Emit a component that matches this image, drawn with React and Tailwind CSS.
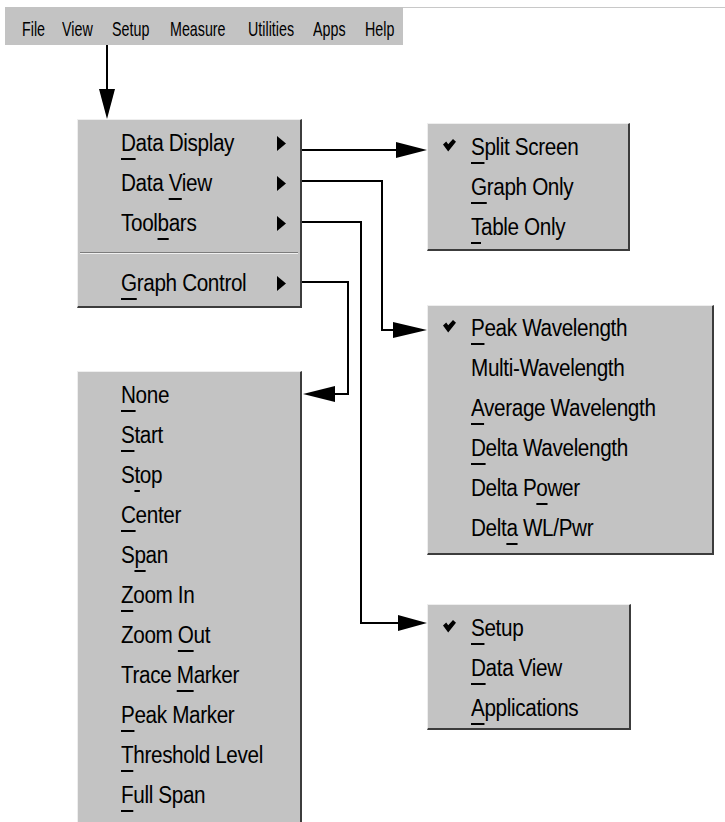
import React from 'react';

const font = "font-['Liberation_Sans',Arial,sans-serif]";

// text with one underlined mnemonic letter (u = index, -1 for none)
const Label = ({ text, u = 0 }) => (
  <span className="inline-block origin-left scale-x-[0.9] whitespace-nowrap">
    {u < 0 ? (
      text
    ) : (
      <>
        {text.slice(0, u)}
        <span className="underline decoration-2 underline-offset-[7px]">{text[u]}</span>
        {text.slice(u + 1)}
      </>
    )}
  </span>
);

const Check = () => (
  <svg width="13" height="13" viewBox="0 0 13 13" className="block">
    <polygon points="0,5.5 3.2,2.6 5.2,5.2 10,0 13,2.8 5.2,12.5" fill="#000" />
  </svg>
);

const SubArrow = () => (
  <svg width="9" height="15" viewBox="0 0 9 15" className="block">
    <polygon points="0,0 9,7.5 0,15" fill="#000" />
  </svg>
);

const Menu = ({ className, children }) => (
  <div
    className={`absolute bg-[#c3c3c3] border-t border-l border-t-[#eeeeee] border-l-[#eeeeee] border-r-2 border-b-2 border-r-[#3c3c3c] border-b-[#3c3c3c] ${className}`}
  >
    {children}
  </div>
);

const Item = ({ text, u, checked, sub }) => (
  <div className="flex items-center h-[40px] pr-[14px]">
    <div className="w-[43px] flex items-center pl-[15px] pb-[4px]">{checked && <Check />}</div>
    <div className="flex-1 overflow-visible">
      <Label text={text} u={u} />
    </div>
    {sub && <SubArrow />}
  </div>
);

const menubar = [
  ['File', 'w-[40px]'], ['View', 'w-[50px]'], ['Setup', 'w-[58px]'], ['Measure', 'w-[78px]'],
  ['Utilities', 'w-[65px]'], ['Apps', 'w-[52px]'], ['Help', 'w-[30px]']
];

const graphItems = [
  ['None', 0], ['Start', 0], ['Stop', 1], ['Center', 0], ['Span', 1], ['Zoom In', 0],
  ['Zoom Out', 5], ['Trace Marker', 6], ['Peak Marker', 0], ['Threshold Level', 0], ['Full Span', 0]
];

const peakItems = [
  ['Peak Wavelength', 0, true], ['Multi-Wavelength', -1], ['Average Wavelength', 0],
  ['Delta Wavelength', 0], ['Delta Power', 7], ['Delta WL/Pwr', 4]
];

export default function App() {
  return (
    <div className={`relative w-[725px] h-[822px] bg-white overflow-hidden text-black ${font}`}>
      {/* menubar */}
      <div className="flex mt-[7px]">
        <div className="ml-[5px] w-[398px] h-[38px] bg-[#c3c3c3] flex items-center pl-[17px] pt-[6px] text-[21px]">
          {menubar.map(([m, w]) => (
            <span key={m} className={`${w} shrink-0`}>
              <span className="inline-block origin-left scale-x-[0.68]">{m}</span>
            </span>
          ))}
        </div>
        <div className="flex-1 border-t border-[#c8c8c8]" />
      </div>

      {/* connectors */}
      <svg className="absolute inset-0 pointer-events-none" width="725" height="822">
        <g stroke="#000" strokeWidth="2" fill="none">
          <path d="M107 45 V90" />
          <path d="M302 150 H397" />
          <path d="M302 181 H382 V330 H394" />
          <path d="M302 222 H361 V623 H399" />
          <path d="M302 282 H348 V394 H333" />
        </g>
        <g fill="#000">
          <polygon points="99,89 115,89 107,119" />
          <polygon points="396,142 396,158 427,150" />
          <polygon points="393,322 393,338 427,330" />
          <polygon points="398,615 398,631 427,623" />
          <polygon points="335,386 335,402 303,394" />
        </g>
      </svg>

      <div className="text-[23px] tracking-[-0.4px]">
        {/* View menu */}
        <Menu className="left-[77px] top-[119px] w-[225px] h-[189px] pt-[3px]">
          <Item text="Data Display" u={0} sub />
          <Item text="Data View" u={5} sub />
          <Item text="Toolbars" u={4} sub />
          <div className="h-[20px] flex flex-col justify-center mx-[2px]">
            <div className="h-px bg-[#7c7c7c]" />
            <div className="h-px bg-[#f0f0f0]" />
          </div>
          <Item text="Graph Control" u={0} sub />
        </Menu>

        {/* Data Display submenu */}
        <Menu className="left-[427px] top-[123px] w-[203px] h-[128px] pt-[3px]">
          <Item text="Split Screen" u={0} checked />
          <Item text="Graph Only" u={0} />
          <Item text="Table Only" u={0} />
        </Menu>

        {/* Data View submenu */}
        <Menu className="left-[427px] top-[305px] w-[287px] h-[250px] pt-[2px]">
          {peakItems.map(([t, u, c]) => (
            <Item key={t} text={t} u={u} checked={c} />
          ))}
        </Menu>

        {/* Graph Control submenu */}
        <Menu className="left-[77px] top-[371px] w-[225px] h-[470px] pt-[3px]">
          {graphItems.map(([t, u]) => (
            <Item key={t} text={t} u={u} />
          ))}
        </Menu>

        {/* Toolbars submenu */}
        <Menu className="left-[427px] top-[604px] w-[204px] h-[126px] pt-[3px]">
          <Item text="Setup" u={0} checked />
          <Item text="Data View" u={0} />
          <Item text="Applications" u={0} />
        </Menu>
      </div>
    </div>
  );
}
